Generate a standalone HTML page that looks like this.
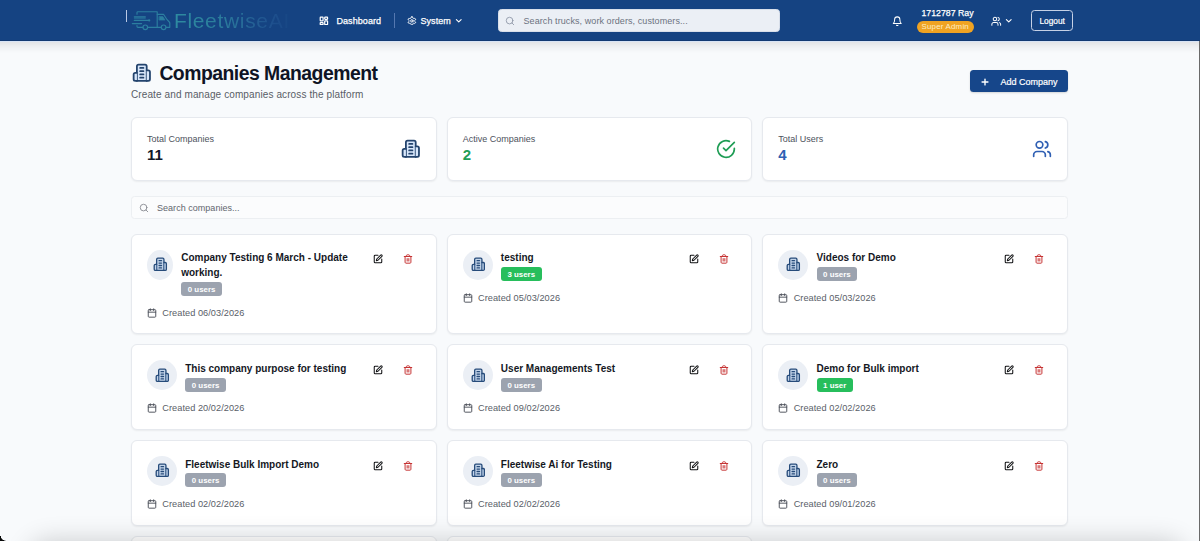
<!DOCTYPE html>
<html lang="en"><head><meta charset="utf-8"><title>Companies Management</title>
<style>
*{box-sizing:border-box;margin:0;padding:0}
html,body{width:1200px;height:541px;overflow:hidden}
body{font-family:"Liberation Sans",sans-serif;background:#f8fafc;color:#111827;position:relative}
.ic{display:block;flex:none}
.nav{position:absolute;left:0;top:0;width:1200px;height:41px;background:#154382;border-bottom:1px solid #133a72}
.navsh{position:absolute;left:0;top:41px;width:1200px;height:12px;border-top:1px solid rgba(110,155,225,.22);background:linear-gradient(to bottom,rgba(0,0,0,.085),rgba(0,0,0,.06) 25%,rgba(0,0,0,.028) 60%,rgba(0,0,0,0))}
.nav .abs{position:absolute;white-space:nowrap}
.cursor{left:126px;top:10px;width:1px;height:12px;background:#b9c9e6}
.logo-t{left:173.9px;top:8.1px;font-size:21px;line-height:26px;letter-spacing:0.68px;color:transparent;background:linear-gradient(90deg,#2e8ba1 0%,#2c839d 25%,#2a789b 45%,#276a98 60%,#235c93 72%,#1f528f 82%,#1c4d8b 90%,#174684 100%);-webkit-background-clip:text;background-clip:text}
.navtxt{letter-spacing:0.06px;font-size:9px;color:#fff;line-height:12px;font-weight:normal;-webkit-text-stroke:0.25px #fff}
.divider{left:394px;top:13px;width:1px;height:15px;background:#5578b0}
.gsearch{left:497.5px;top:9px;width:282.5px;height:23px;background:#ebeff5;border-radius:3.5px;border:1px solid #d8dfea}
.gsearch span{position:absolute;left:25px;top:5px;letter-spacing:0.08px;font-size:9px;line-height:12px;color:#6b7280}
.gsearch .ic{position:absolute;left:6.2px;top:5.8px}
.sbadge{left:916.5px;top:21px;width:57.5px;height:12px;border-radius:6px;background:#f0a322;color:#fdeec4;font-size:7.9px;line-height:12px;text-align:center;letter-spacing:.2px}
.logout{left:1031px;top:10.4px;width:42.3px;height:20.7px;border:1px solid #c5d1e6;border-radius:3.5px;color:#fff;font-size:8.3px;line-height:20px;text-align:center;-webkit-text-stroke:0.2px #fff}
.main{position:absolute;left:131px;top:41px;width:937px}
.head{position:absolute;left:0;top:0;width:100%;height:70px}
.ttl{position:absolute;left:0.6px;top:21.8px;display:flex;align-items:center;height:20px}
.ttl h1{margin-left:8.2px;position:relative;top:0.6px;font-size:19.4px;font-weight:bold;line-height:20px;color:#0f1424;white-space:nowrap;letter-spacing:-0.52px}
.sub{position:absolute;left:0;top:48px;font-size:10px;line-height:12px;color:#585d66;white-space:nowrap;letter-spacing:0.11px}
.addbtn{position:absolute;right:0;top:29.3px;width:98.3px;height:22.2px;background:#16468a;border-radius:3.5px;color:#fff;display:flex;align-items:center;box-shadow:0 1px 2px rgba(0,0,0,.15)}
.addbtn .ic{margin-left:10.6px;position:relative;top:0.5px}
.addbtn span{position:relative;top:0.7px;margin-left:10.2px;font-size:9px;line-height:12px;-webkit-text-stroke:0.2px #fff}
.stats{position:absolute;left:0;top:76px;width:100%;display:grid;grid-template-columns:repeat(3,1fr);gap:10px}
.stat{height:64px;background:#fff;border:1px solid #e6e9ee;border-radius:6px;box-shadow:0 1px 2px rgba(0,0,0,.06);display:flex;align-items:center;justify-content:space-between;padding:0 15px}
.sl{font-size:9px;line-height:12px;color:#4d525c}
.sv{position:relative;top:0px;font-size:15px;line-height:20px;font-weight:bold}
.csearch{position:absolute;left:0;top:155px;width:100%;height:23px;background:#fbfcfd;border:1px solid #eceff2;border-radius:3.5px}
.csearch .ic{position:absolute;left:6.8px;top:5.8px}
.csearch span{position:absolute;left:25px;top:5px;font-size:9px;line-height:12px;color:#62666e;letter-spacing:0.03px}
.grid{position:absolute;left:0;top:192.8px;width:100%;display:grid;grid-template-columns:repeat(3,1fr);grid-template-rows:100.6px 85.7px 85.7px 85.7px;gap:10px}
.card{background:#fff;border:1px solid #e6e9ee;border-radius:6px;box-shadow:0 1px 2px rgba(0,0,0,.06);padding:15px}
.card.empty{height:60px}
.ch{display:flex;justify-content:space-between;align-items:flex-start;margin-bottom:10px}
.cl{display:flex;align-items:flex-start;min-width:0}
.av .ic{position:relative;left:0.4px;top:-0.5px}
.av{width:30px;height:30px;border-radius:50%;background:#ebeff5;display:flex;align-items:center;justify-content:center;flex:none;margin-right:8.2px}
.av.shr{width:26px}
.ct h3{font-size:10px;line-height:15px;font-weight:bold;color:#15181f;letter-spacing:0;position:relative;top:0.6px}
.bdg{display:block;width:max-content;margin-top:2.4px;height:13.75px;line-height:15.5px;padding:0 6.55px;border-radius:3px;background:#9ca3af;color:#fff;font-size:7.9px;font-weight:bold}
.bdg.g{background:#27be5c}
.acts{display:flex;flex:none;margin-top:4.6px;margin-right:7.6px}
.acts .ic{margin-left:20px}
.cr{display:flex;align-items:center;height:12.5px;position:relative;top:0.6px}
.cr span{margin-left:5.3px;font-size:9.2px;line-height:12.5px;color:#595e68;letter-spacing:0.05px}
.botshadow{position:absolute;left:34px;width:1146px;top:546px;height:30px;border-radius:20px;box-shadow:0 0 26px 5px rgba(0,0,0,.19)}
.blc{position:absolute;left:0;bottom:0;width:5.5px;height:5px;background:radial-gradient(ellipse 5.5px 5px at 100% 0,rgba(0,0,0,0) 88%,#0a0a0a 100%)}
.redge{position:absolute;left:1199px;top:41px;width:1px;height:500px;background:#6a6a6a}

</style></head><body>
<div class="nav">
<div class="abs cursor"></div>
<svg class="abs" style="left:130px;top:8px" width="42" height="24" viewBox="130 8 42 24" fill="none" stroke="#2c7fa0" stroke-width="1.15" stroke-linecap="round" stroke-linejoin="round">
<path d="M137 14.2v-1.6q0-0.9 0.9-0.9h19.3v15.6"/>
<path d="M157.2 14.3h6.3l3.6 5.4 2.2 2.3q0.5 0.5 0.5 1.3v4h-3.6"/>
<path d="M159.3 16.6h3.5l2.2 3.5h-5.7z" fill="#2c7fa0" stroke-width="0.6"/>
<path d="M161.2 27.3h-13.5"/><path d="M142.9 27.3h-5q-0.9 0-0.9-0.9v-0.8"/>
<circle cx="145.3" cy="27.3" r="2.3"/><circle cx="163.6" cy="27.3" r="2.3"/>
<path d="M134.3 16.8h11"/><path d="M134.3 18.1h11" stroke-width="0.9"/><path d="M134.3 20.4h14.4"/><circle cx="149.2" cy="20.4" r="0.55"/><path d="M132.3 23.6h9.3"/>
</svg>
<div class="abs logo-t">FleetwiseAI</div>
<div class="abs" style="left:318.8px;top:15.6px"><svg class="ic" width="9.8" height="9.8" viewBox="0 0 24 24" fill="none" stroke="#fff" stroke-width="3" stroke-linecap="round" stroke-linejoin="round" style=""><rect width="7" height="9" x="3" y="3" rx="1"/><rect width="7" height="5" x="14" y="3" rx="1"/><rect width="7" height="9" x="14" y="12" rx="1"/><rect width="7" height="5" x="3" y="16" rx="1"/></svg></div>
<div class="abs navtxt" style="left:336.5px;top:14.5px">Dashboard</div>
<div class="abs divider"></div>
<div class="abs" style="left:407.3px;top:15.6px"><svg class="ic" width="9.8" height="9.8" viewBox="0 0 24 24" fill="none" stroke="#fff" stroke-width="2.4" stroke-linecap="round" stroke-linejoin="round" style=""><path d="M12.22 2h-.44a2 2 0 0 0-2 2v.18a2 2 0 0 1-1 1.73l-.43.25a2 2 0 0 1-2 0l-.15-.08a2 2 0 0 0-2.73.73l-.22.38a2 2 0 0 0 .73 2.73l.15.1a2 2 0 0 1 1 1.72v.51a2 2 0 0 1-1 1.74l-.15.09a2 2 0 0 0-.73 2.73l.22.38a2 2 0 0 0 2.73.73l.15-.08a2 2 0 0 1 2 0l.43.25a2 2 0 0 1 1 1.73V20a2 2 0 0 0 2 2h.44a2 2 0 0 0 2-2v-.18a2 2 0 0 1 1-1.73l.43-.25a2 2 0 0 1 2 0l.15.08a2 2 0 0 0 2.73-.73l.22-.39a2 2 0 0 0-.73-2.73l-.15-.08a2 2 0 0 1-1-1.74v-.5a2 2 0 0 1 1-1.74l.15-.09a2 2 0 0 0 .73-2.73l-.22-.38a2 2 0 0 0-2.73-.73l-.15.08a2 2 0 0 1-2 0l-.43-.25a2 2 0 0 1-1-1.73V4a2 2 0 0 0-2-2z"/><circle cx="12" cy="12" r="3"/></svg></div>
<div class="abs navtxt" style="left:420.5px;top:14.5px">System</div>
<div class="abs" style="left:454px;top:16px"><svg class="ic" width="9.5" height="9.5" viewBox="0 0 24 24" fill="none" stroke="#fff" stroke-width="2.8" stroke-linecap="round" stroke-linejoin="round" style=""><path d="m6 9 6 6 6-6"/></svg></div>
<div class="abs gsearch"><svg class="ic" width="10" height="10" viewBox="0 0 24 24" fill="none" stroke="#8a93a3" stroke-width="2" stroke-linecap="round" stroke-linejoin="round" style=""><circle cx="11" cy="11" r="8"/><path d="m21 21-4.3-4.3"/></svg><span>Search trucks, work orders, customers...</span></div>
<div class="abs" style="left:891.8px;top:15.6px"><svg class="ic" width="10.5" height="10.5" viewBox="0 0 24 24" fill="none" stroke="#fff" stroke-width="2.3" stroke-linecap="round" stroke-linejoin="round" style=""><path d="M6 8a6 6 0 0 1 12 0c0 7 3 9 3 9H3s3-2 3-9"/><path d="M10.3 21a1.94 1.94 0 0 0 3.4 0"/></svg></div>
<div class="abs navtxt" style="left:921.5px;top:7px;font-size:8.75px;letter-spacing:0">1712787 Ray</div>
<div class="abs sbadge">Super Admin</div>
<div class="abs" style="left:991px;top:15.5px"><svg class="ic" width="10.5" height="10.5" viewBox="0 0 24 24" fill="none" stroke="#fff" stroke-width="2.3" stroke-linecap="round" stroke-linejoin="round" style=""><path d="M16 21v-2a4 4 0 0 0-4-4H6a4 4 0 0 0-4 4v2"/><circle cx="9" cy="7" r="4"/><path d="M22 21v-2a4 4 0 0 0-3-3.87"/><path d="M16 3.13a4 4 0 0 1 0 7.75"/></svg></div>
<div class="abs" style="left:1004px;top:16.2px"><svg class="ic" width="9.5" height="9.5" viewBox="0 0 24 24" fill="none" stroke="#fff" stroke-width="2.8" stroke-linecap="round" stroke-linejoin="round" style=""><path d="m6 9 6 6 6-6"/></svg></div>
<div class="abs logout">Logout</div>
</div>
<div class="main">
<div class="head"><div class="hl"><div class="ttl"><svg class="ic" width="19.6" height="19.6" viewBox="0 0 24 24" fill="none" stroke="#24446e" stroke-width="2.2" stroke-linecap="round" stroke-linejoin="round" style=""><path fill="#d8e7fb" fill-opacity="1" d="M6 22V4a2 2 0 0 1 2-2h8a2 2 0 0 1 2 2v18Z"/><path fill="#d8e7fb" fill-opacity="1" d="M6 12H4a2 2 0 0 0-2 2v6a2 2 0 0 0 2 2h2"/><path fill="#d8e7fb" fill-opacity="1" d="M18 9h2a2 2 0 0 1 2 2v9a2 2 0 0 1-2 2h-2"/><path d="M10 6h4"/><path d="M10 10h4"/><path d="M10 14h4"/><path d="M10 18h4"/></svg><h1>Companies Management</h1></div><p class="sub">Create and manage companies across the platform</p></div>
<div class="addbtn"><svg class="ic" width="10" height="10" viewBox="0 0 24 24" fill="none" stroke="#fff" stroke-width="3.3" stroke-linecap="round" stroke-linejoin="round" style=""><path d="M5 12h14"/><path d="M12 5v14"/></svg><span>Add Company</span></div></div>
<div class="stats">
<div class="stat"><div><div class="sl">Total Companies</div><div class="sv" style="color:#111827">11</div></div><svg class="ic" width="19.6" height="19.6" viewBox="0 0 24 24" fill="none" stroke="#24446e" stroke-width="2.2" stroke-linecap="round" stroke-linejoin="round" style=""><path fill="#d8e7fb" fill-opacity="1" d="M6 22V4a2 2 0 0 1 2-2h8a2 2 0 0 1 2 2v18Z"/><path fill="#d8e7fb" fill-opacity="1" d="M6 12H4a2 2 0 0 0-2 2v6a2 2 0 0 0 2 2h2"/><path fill="#d8e7fb" fill-opacity="1" d="M18 9h2a2 2 0 0 1 2 2v9a2 2 0 0 1-2 2h-2"/><path d="M10 6h4"/><path d="M10 10h4"/><path d="M10 14h4"/><path d="M10 18h4"/></svg></div>
<div class="stat"><div><div class="sl">Active Companies</div><div class="sv" style="color:#1f9d55">2</div></div><svg class="ic" width="20" height="20" viewBox="0 0 24 24" fill="none" stroke="#1f9d55" stroke-width="2" stroke-linecap="round" stroke-linejoin="round" style=""><path d="M22 11.08V12a10 10 0 1 1-5.93-9.14"/><path d="m9 11 3 3L22 4"/></svg></div>
<div class="stat"><div><div class="sl">Total Users</div><div class="sv" style="color:#2f5fb3">4</div></div><svg class="ic" width="20" height="20" viewBox="0 0 24 24" fill="none" stroke="#2f5fb3" stroke-width="2" stroke-linecap="round" stroke-linejoin="round" style=""><path d="M16 21v-2a4 4 0 0 0-4-4H6a4 4 0 0 0-4 4v2"/><circle cx="9" cy="7" r="4"/><path d="M22 21v-2a4 4 0 0 0-3-3.87"/><path d="M16 3.13a4 4 0 0 1 0 7.75"/></svg></div>
</div>
<div class="csearch"><svg class="ic" width="10" height="10" viewBox="0 0 24 24" fill="none" stroke="#85888f" stroke-width="2.1" stroke-linecap="round" stroke-linejoin="round" style=""><circle cx="11" cy="11" r="8"/><path d="m21 21-4.3-4.3"/></svg><span>Search companies...</span></div>
<div class="grid">
<div class="card"><div class="ch"><div class="cl"><div class="av shr"><svg class="ic" width="14.6" height="14.6" viewBox="0 0 24 24" fill="none" stroke="#264b7a" stroke-width="2.15" stroke-linecap="round" stroke-linejoin="round" style=""><path fill="#9dbbe0" fill-opacity="0.5" d="M6 22V4a2 2 0 0 1 2-2h8a2 2 0 0 1 2 2v18Z"/><path fill="#9dbbe0" fill-opacity="0.5" d="M6 12H4a2 2 0 0 0-2 2v6a2 2 0 0 0 2 2h2"/><path fill="#9dbbe0" fill-opacity="0.5" d="M18 9h2a2 2 0 0 1 2 2v9a2 2 0 0 1-2 2h-2"/><path d="M10 6h4"/><path d="M10 10h4"/><path d="M10 14h4"/><path d="M10 18h4"/></svg></div><div class="ct"><h3>Company Testing 6 March - Update working.</h3><span class="bdg">0 users</span></div></div><div class="acts"><svg class="ic" width="10" height="10" viewBox="0 0 24 24" fill="none" stroke="#111214" stroke-width="2.5" stroke-linecap="round" stroke-linejoin="round" style=""><path d="M12 3H5a2 2 0 0 0-2 2v14a2 2 0 0 0 2 2h14a2 2 0 0 0 2-2v-7"/><path d="M18.375 2.625a2.121 2.121 0 1 1 3 3L12 15l-4 1 1-4Z"/></svg><svg class="ic" width="10" height="10" viewBox="0 0 24 24" fill="none" stroke="#c63434" stroke-width="2.4" stroke-linecap="round" stroke-linejoin="round" style=""><path d="M3 6h18"/><path d="M19 6v14c0 1-1 2-2 2H7c-1 0-2-1-2-2V6"/><path d="M8 6V4c0-1 1-2 2-2h4c1 0 2 1 2 2v2"/><path d="M10 11v6"/><path d="M14 11v6"/></svg></div></div><div class="cr"><svg class="ic" width="10" height="10" viewBox="0 0 24 24" fill="none" stroke="#4d525b" stroke-width="2.3" stroke-linecap="round" stroke-linejoin="round" style=""><path d="M8 2v4"/><path d="M16 2v4"/><rect width="18" height="18" x="3" y="4" rx="2"/><path d="M3 10h18"/></svg><span>Created 06/03/2026</span></div></div>
<div class="card"><div class="ch"><div class="cl"><div class="av"><svg class="ic" width="14.6" height="14.6" viewBox="0 0 24 24" fill="none" stroke="#264b7a" stroke-width="2.15" stroke-linecap="round" stroke-linejoin="round" style=""><path fill="#9dbbe0" fill-opacity="0.5" d="M6 22V4a2 2 0 0 1 2-2h8a2 2 0 0 1 2 2v18Z"/><path fill="#9dbbe0" fill-opacity="0.5" d="M6 12H4a2 2 0 0 0-2 2v6a2 2 0 0 0 2 2h2"/><path fill="#9dbbe0" fill-opacity="0.5" d="M18 9h2a2 2 0 0 1 2 2v9a2 2 0 0 1-2 2h-2"/><path d="M10 6h4"/><path d="M10 10h4"/><path d="M10 14h4"/><path d="M10 18h4"/></svg></div><div class="ct"><h3>testing</h3><span class="bdg g">3 users</span></div></div><div class="acts"><svg class="ic" width="10" height="10" viewBox="0 0 24 24" fill="none" stroke="#111214" stroke-width="2.5" stroke-linecap="round" stroke-linejoin="round" style=""><path d="M12 3H5a2 2 0 0 0-2 2v14a2 2 0 0 0 2 2h14a2 2 0 0 0 2-2v-7"/><path d="M18.375 2.625a2.121 2.121 0 1 1 3 3L12 15l-4 1 1-4Z"/></svg><svg class="ic" width="10" height="10" viewBox="0 0 24 24" fill="none" stroke="#c63434" stroke-width="2.4" stroke-linecap="round" stroke-linejoin="round" style=""><path d="M3 6h18"/><path d="M19 6v14c0 1-1 2-2 2H7c-1 0-2-1-2-2V6"/><path d="M8 6V4c0-1 1-2 2-2h4c1 0 2 1 2 2v2"/><path d="M10 11v6"/><path d="M14 11v6"/></svg></div></div><div class="cr"><svg class="ic" width="10" height="10" viewBox="0 0 24 24" fill="none" stroke="#4d525b" stroke-width="2.3" stroke-linecap="round" stroke-linejoin="round" style=""><path d="M8 2v4"/><path d="M16 2v4"/><rect width="18" height="18" x="3" y="4" rx="2"/><path d="M3 10h18"/></svg><span>Created 05/03/2026</span></div></div>
<div class="card"><div class="ch"><div class="cl"><div class="av"><svg class="ic" width="14.6" height="14.6" viewBox="0 0 24 24" fill="none" stroke="#264b7a" stroke-width="2.15" stroke-linecap="round" stroke-linejoin="round" style=""><path fill="#9dbbe0" fill-opacity="0.5" d="M6 22V4a2 2 0 0 1 2-2h8a2 2 0 0 1 2 2v18Z"/><path fill="#9dbbe0" fill-opacity="0.5" d="M6 12H4a2 2 0 0 0-2 2v6a2 2 0 0 0 2 2h2"/><path fill="#9dbbe0" fill-opacity="0.5" d="M18 9h2a2 2 0 0 1 2 2v9a2 2 0 0 1-2 2h-2"/><path d="M10 6h4"/><path d="M10 10h4"/><path d="M10 14h4"/><path d="M10 18h4"/></svg></div><div class="ct"><h3>Videos for Demo</h3><span class="bdg">0 users</span></div></div><div class="acts"><svg class="ic" width="10" height="10" viewBox="0 0 24 24" fill="none" stroke="#111214" stroke-width="2.5" stroke-linecap="round" stroke-linejoin="round" style=""><path d="M12 3H5a2 2 0 0 0-2 2v14a2 2 0 0 0 2 2h14a2 2 0 0 0 2-2v-7"/><path d="M18.375 2.625a2.121 2.121 0 1 1 3 3L12 15l-4 1 1-4Z"/></svg><svg class="ic" width="10" height="10" viewBox="0 0 24 24" fill="none" stroke="#c63434" stroke-width="2.4" stroke-linecap="round" stroke-linejoin="round" style=""><path d="M3 6h18"/><path d="M19 6v14c0 1-1 2-2 2H7c-1 0-2-1-2-2V6"/><path d="M8 6V4c0-1 1-2 2-2h4c1 0 2 1 2 2v2"/><path d="M10 11v6"/><path d="M14 11v6"/></svg></div></div><div class="cr"><svg class="ic" width="10" height="10" viewBox="0 0 24 24" fill="none" stroke="#4d525b" stroke-width="2.3" stroke-linecap="round" stroke-linejoin="round" style=""><path d="M8 2v4"/><path d="M16 2v4"/><rect width="18" height="18" x="3" y="4" rx="2"/><path d="M3 10h18"/></svg><span>Created 05/03/2026</span></div></div>
<div class="card"><div class="ch"><div class="cl"><div class="av"><svg class="ic" width="14.6" height="14.6" viewBox="0 0 24 24" fill="none" stroke="#264b7a" stroke-width="2.15" stroke-linecap="round" stroke-linejoin="round" style=""><path fill="#9dbbe0" fill-opacity="0.5" d="M6 22V4a2 2 0 0 1 2-2h8a2 2 0 0 1 2 2v18Z"/><path fill="#9dbbe0" fill-opacity="0.5" d="M6 12H4a2 2 0 0 0-2 2v6a2 2 0 0 0 2 2h2"/><path fill="#9dbbe0" fill-opacity="0.5" d="M18 9h2a2 2 0 0 1 2 2v9a2 2 0 0 1-2 2h-2"/><path d="M10 6h4"/><path d="M10 10h4"/><path d="M10 14h4"/><path d="M10 18h4"/></svg></div><div class="ct"><h3>This company purpose for testing</h3><span class="bdg">0 users</span></div></div><div class="acts"><svg class="ic" width="10" height="10" viewBox="0 0 24 24" fill="none" stroke="#111214" stroke-width="2.5" stroke-linecap="round" stroke-linejoin="round" style=""><path d="M12 3H5a2 2 0 0 0-2 2v14a2 2 0 0 0 2 2h14a2 2 0 0 0 2-2v-7"/><path d="M18.375 2.625a2.121 2.121 0 1 1 3 3L12 15l-4 1 1-4Z"/></svg><svg class="ic" width="10" height="10" viewBox="0 0 24 24" fill="none" stroke="#c63434" stroke-width="2.4" stroke-linecap="round" stroke-linejoin="round" style=""><path d="M3 6h18"/><path d="M19 6v14c0 1-1 2-2 2H7c-1 0-2-1-2-2V6"/><path d="M8 6V4c0-1 1-2 2-2h4c1 0 2 1 2 2v2"/><path d="M10 11v6"/><path d="M14 11v6"/></svg></div></div><div class="cr"><svg class="ic" width="10" height="10" viewBox="0 0 24 24" fill="none" stroke="#4d525b" stroke-width="2.3" stroke-linecap="round" stroke-linejoin="round" style=""><path d="M8 2v4"/><path d="M16 2v4"/><rect width="18" height="18" x="3" y="4" rx="2"/><path d="M3 10h18"/></svg><span>Created 20/02/2026</span></div></div>
<div class="card"><div class="ch"><div class="cl"><div class="av"><svg class="ic" width="14.6" height="14.6" viewBox="0 0 24 24" fill="none" stroke="#264b7a" stroke-width="2.15" stroke-linecap="round" stroke-linejoin="round" style=""><path fill="#9dbbe0" fill-opacity="0.5" d="M6 22V4a2 2 0 0 1 2-2h8a2 2 0 0 1 2 2v18Z"/><path fill="#9dbbe0" fill-opacity="0.5" d="M6 12H4a2 2 0 0 0-2 2v6a2 2 0 0 0 2 2h2"/><path fill="#9dbbe0" fill-opacity="0.5" d="M18 9h2a2 2 0 0 1 2 2v9a2 2 0 0 1-2 2h-2"/><path d="M10 6h4"/><path d="M10 10h4"/><path d="M10 14h4"/><path d="M10 18h4"/></svg></div><div class="ct"><h3>User Managements Test</h3><span class="bdg">0 users</span></div></div><div class="acts"><svg class="ic" width="10" height="10" viewBox="0 0 24 24" fill="none" stroke="#111214" stroke-width="2.5" stroke-linecap="round" stroke-linejoin="round" style=""><path d="M12 3H5a2 2 0 0 0-2 2v14a2 2 0 0 0 2 2h14a2 2 0 0 0 2-2v-7"/><path d="M18.375 2.625a2.121 2.121 0 1 1 3 3L12 15l-4 1 1-4Z"/></svg><svg class="ic" width="10" height="10" viewBox="0 0 24 24" fill="none" stroke="#c63434" stroke-width="2.4" stroke-linecap="round" stroke-linejoin="round" style=""><path d="M3 6h18"/><path d="M19 6v14c0 1-1 2-2 2H7c-1 0-2-1-2-2V6"/><path d="M8 6V4c0-1 1-2 2-2h4c1 0 2 1 2 2v2"/><path d="M10 11v6"/><path d="M14 11v6"/></svg></div></div><div class="cr"><svg class="ic" width="10" height="10" viewBox="0 0 24 24" fill="none" stroke="#4d525b" stroke-width="2.3" stroke-linecap="round" stroke-linejoin="round" style=""><path d="M8 2v4"/><path d="M16 2v4"/><rect width="18" height="18" x="3" y="4" rx="2"/><path d="M3 10h18"/></svg><span>Created 09/02/2026</span></div></div>
<div class="card"><div class="ch"><div class="cl"><div class="av"><svg class="ic" width="14.6" height="14.6" viewBox="0 0 24 24" fill="none" stroke="#264b7a" stroke-width="2.15" stroke-linecap="round" stroke-linejoin="round" style=""><path fill="#9dbbe0" fill-opacity="0.5" d="M6 22V4a2 2 0 0 1 2-2h8a2 2 0 0 1 2 2v18Z"/><path fill="#9dbbe0" fill-opacity="0.5" d="M6 12H4a2 2 0 0 0-2 2v6a2 2 0 0 0 2 2h2"/><path fill="#9dbbe0" fill-opacity="0.5" d="M18 9h2a2 2 0 0 1 2 2v9a2 2 0 0 1-2 2h-2"/><path d="M10 6h4"/><path d="M10 10h4"/><path d="M10 14h4"/><path d="M10 18h4"/></svg></div><div class="ct"><h3>Demo for Bulk import</h3><span class="bdg g">1 user</span></div></div><div class="acts"><svg class="ic" width="10" height="10" viewBox="0 0 24 24" fill="none" stroke="#111214" stroke-width="2.5" stroke-linecap="round" stroke-linejoin="round" style=""><path d="M12 3H5a2 2 0 0 0-2 2v14a2 2 0 0 0 2 2h14a2 2 0 0 0 2-2v-7"/><path d="M18.375 2.625a2.121 2.121 0 1 1 3 3L12 15l-4 1 1-4Z"/></svg><svg class="ic" width="10" height="10" viewBox="0 0 24 24" fill="none" stroke="#c63434" stroke-width="2.4" stroke-linecap="round" stroke-linejoin="round" style=""><path d="M3 6h18"/><path d="M19 6v14c0 1-1 2-2 2H7c-1 0-2-1-2-2V6"/><path d="M8 6V4c0-1 1-2 2-2h4c1 0 2 1 2 2v2"/><path d="M10 11v6"/><path d="M14 11v6"/></svg></div></div><div class="cr"><svg class="ic" width="10" height="10" viewBox="0 0 24 24" fill="none" stroke="#4d525b" stroke-width="2.3" stroke-linecap="round" stroke-linejoin="round" style=""><path d="M8 2v4"/><path d="M16 2v4"/><rect width="18" height="18" x="3" y="4" rx="2"/><path d="M3 10h18"/></svg><span>Created 02/02/2026</span></div></div>
<div class="card"><div class="ch"><div class="cl"><div class="av"><svg class="ic" width="14.6" height="14.6" viewBox="0 0 24 24" fill="none" stroke="#264b7a" stroke-width="2.15" stroke-linecap="round" stroke-linejoin="round" style=""><path fill="#9dbbe0" fill-opacity="0.5" d="M6 22V4a2 2 0 0 1 2-2h8a2 2 0 0 1 2 2v18Z"/><path fill="#9dbbe0" fill-opacity="0.5" d="M6 12H4a2 2 0 0 0-2 2v6a2 2 0 0 0 2 2h2"/><path fill="#9dbbe0" fill-opacity="0.5" d="M18 9h2a2 2 0 0 1 2 2v9a2 2 0 0 1-2 2h-2"/><path d="M10 6h4"/><path d="M10 10h4"/><path d="M10 14h4"/><path d="M10 18h4"/></svg></div><div class="ct"><h3>Fleetwise Bulk Import Demo</h3><span class="bdg">0 users</span></div></div><div class="acts"><svg class="ic" width="10" height="10" viewBox="0 0 24 24" fill="none" stroke="#111214" stroke-width="2.5" stroke-linecap="round" stroke-linejoin="round" style=""><path d="M12 3H5a2 2 0 0 0-2 2v14a2 2 0 0 0 2 2h14a2 2 0 0 0 2-2v-7"/><path d="M18.375 2.625a2.121 2.121 0 1 1 3 3L12 15l-4 1 1-4Z"/></svg><svg class="ic" width="10" height="10" viewBox="0 0 24 24" fill="none" stroke="#c63434" stroke-width="2.4" stroke-linecap="round" stroke-linejoin="round" style=""><path d="M3 6h18"/><path d="M19 6v14c0 1-1 2-2 2H7c-1 0-2-1-2-2V6"/><path d="M8 6V4c0-1 1-2 2-2h4c1 0 2 1 2 2v2"/><path d="M10 11v6"/><path d="M14 11v6"/></svg></div></div><div class="cr"><svg class="ic" width="10" height="10" viewBox="0 0 24 24" fill="none" stroke="#4d525b" stroke-width="2.3" stroke-linecap="round" stroke-linejoin="round" style=""><path d="M8 2v4"/><path d="M16 2v4"/><rect width="18" height="18" x="3" y="4" rx="2"/><path d="M3 10h18"/></svg><span>Created 02/02/2026</span></div></div>
<div class="card"><div class="ch"><div class="cl"><div class="av"><svg class="ic" width="14.6" height="14.6" viewBox="0 0 24 24" fill="none" stroke="#264b7a" stroke-width="2.15" stroke-linecap="round" stroke-linejoin="round" style=""><path fill="#9dbbe0" fill-opacity="0.5" d="M6 22V4a2 2 0 0 1 2-2h8a2 2 0 0 1 2 2v18Z"/><path fill="#9dbbe0" fill-opacity="0.5" d="M6 12H4a2 2 0 0 0-2 2v6a2 2 0 0 0 2 2h2"/><path fill="#9dbbe0" fill-opacity="0.5" d="M18 9h2a2 2 0 0 1 2 2v9a2 2 0 0 1-2 2h-2"/><path d="M10 6h4"/><path d="M10 10h4"/><path d="M10 14h4"/><path d="M10 18h4"/></svg></div><div class="ct"><h3>Fleetwise Ai for Testing</h3><span class="bdg">0 users</span></div></div><div class="acts"><svg class="ic" width="10" height="10" viewBox="0 0 24 24" fill="none" stroke="#111214" stroke-width="2.5" stroke-linecap="round" stroke-linejoin="round" style=""><path d="M12 3H5a2 2 0 0 0-2 2v14a2 2 0 0 0 2 2h14a2 2 0 0 0 2-2v-7"/><path d="M18.375 2.625a2.121 2.121 0 1 1 3 3L12 15l-4 1 1-4Z"/></svg><svg class="ic" width="10" height="10" viewBox="0 0 24 24" fill="none" stroke="#c63434" stroke-width="2.4" stroke-linecap="round" stroke-linejoin="round" style=""><path d="M3 6h18"/><path d="M19 6v14c0 1-1 2-2 2H7c-1 0-2-1-2-2V6"/><path d="M8 6V4c0-1 1-2 2-2h4c1 0 2 1 2 2v2"/><path d="M10 11v6"/><path d="M14 11v6"/></svg></div></div><div class="cr"><svg class="ic" width="10" height="10" viewBox="0 0 24 24" fill="none" stroke="#4d525b" stroke-width="2.3" stroke-linecap="round" stroke-linejoin="round" style=""><path d="M8 2v4"/><path d="M16 2v4"/><rect width="18" height="18" x="3" y="4" rx="2"/><path d="M3 10h18"/></svg><span>Created 02/02/2026</span></div></div>
<div class="card"><div class="ch"><div class="cl"><div class="av"><svg class="ic" width="14.6" height="14.6" viewBox="0 0 24 24" fill="none" stroke="#264b7a" stroke-width="2.15" stroke-linecap="round" stroke-linejoin="round" style=""><path fill="#9dbbe0" fill-opacity="0.5" d="M6 22V4a2 2 0 0 1 2-2h8a2 2 0 0 1 2 2v18Z"/><path fill="#9dbbe0" fill-opacity="0.5" d="M6 12H4a2 2 0 0 0-2 2v6a2 2 0 0 0 2 2h2"/><path fill="#9dbbe0" fill-opacity="0.5" d="M18 9h2a2 2 0 0 1 2 2v9a2 2 0 0 1-2 2h-2"/><path d="M10 6h4"/><path d="M10 10h4"/><path d="M10 14h4"/><path d="M10 18h4"/></svg></div><div class="ct"><h3>Zero</h3><span class="bdg">0 users</span></div></div><div class="acts"><svg class="ic" width="10" height="10" viewBox="0 0 24 24" fill="none" stroke="#111214" stroke-width="2.5" stroke-linecap="round" stroke-linejoin="round" style=""><path d="M12 3H5a2 2 0 0 0-2 2v14a2 2 0 0 0 2 2h14a2 2 0 0 0 2-2v-7"/><path d="M18.375 2.625a2.121 2.121 0 1 1 3 3L12 15l-4 1 1-4Z"/></svg><svg class="ic" width="10" height="10" viewBox="0 0 24 24" fill="none" stroke="#c63434" stroke-width="2.4" stroke-linecap="round" stroke-linejoin="round" style=""><path d="M3 6h18"/><path d="M19 6v14c0 1-1 2-2 2H7c-1 0-2-1-2-2V6"/><path d="M8 6V4c0-1 1-2 2-2h4c1 0 2 1 2 2v2"/><path d="M10 11v6"/><path d="M14 11v6"/></svg></div></div><div class="cr"><svg class="ic" width="10" height="10" viewBox="0 0 24 24" fill="none" stroke="#4d525b" stroke-width="2.3" stroke-linecap="round" stroke-linejoin="round" style=""><path d="M8 2v4"/><path d="M16 2v4"/><rect width="18" height="18" x="3" y="4" rx="2"/><path d="M3 10h18"/></svg><span>Created 09/01/2026</span></div></div>
<div class="card empty"></div>
<div class="card empty"></div>
</div></div>
<div class="navsh"></div><div class="botshadow"></div><div class="blc"></div><div class="redge"></div>
</body></html>
